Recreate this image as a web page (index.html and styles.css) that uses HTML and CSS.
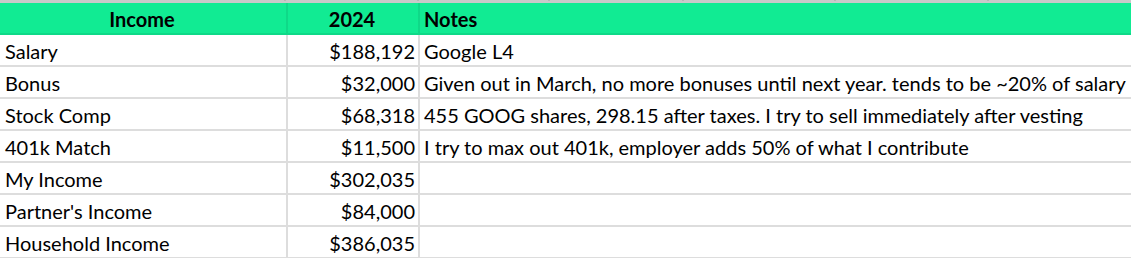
FILE: index.html
```html
<!DOCTYPE html>
<html>
<head>
<meta charset="utf-8">
<link rel="stylesheet" href="styles.css">
</head>
<body>
<div class="sheet">
  <div class="strip">
    <span class="tick t1"></span><span class="tick t2"></span><span class="tick t3"></span><span class="tick t4"></span><span class="tick t5"></span><span class="tick t6"></span><span class="tick rest"></span>
  </div>
  <div class="grid">
    <div class="cell head center">Income</div>
    <div class="cell head center">2024</div>
    <div class="cell head notes">Notes</div>

    <div class="cell">Salary</div>
    <div class="cell num">$188,192</div>
    <div class="cell notes">Google L4</div>

    <div class="cell">Bonus</div>
    <div class="cell num">$32,000</div>
    <div class="cell notes">Given out in March, no more bonuses until next year. tends to be ~20% of salary</div>

    <div class="cell">Stock Comp</div>
    <div class="cell num">$68,318</div>
    <div class="cell notes">455 GOOG shares, 298.15 after taxes. I try to sell immediately after vesting</div>

    <div class="cell">401k Match</div>
    <div class="cell num">$11,500</div>
    <div class="cell notes">I try to max out 401k, employer adds 50% of what I contribute</div>

    <div class="cell">My Income</div>
    <div class="cell num">$302,035</div>
    <div class="cell notes"></div>

    <div class="cell">Partner's Income</div>
    <div class="cell num">$84,000</div>
    <div class="cell notes"></div>

    <div class="cell">Household Income</div>
    <div class="cell num">$386,035</div>
    <div class="cell notes"></div>
  </div>
</div>
</body>
</html>
```
FILE: styles.css
```css
html, body {
  margin: 0;
  padding: 0;
  background: #ffffff;
}
body {
  font-family: Lato, "Liberation Sans", sans-serif;
  color: #000000;
  width: 1131px;
  height: 258px;
  overflow: hidden;
}
.sheet {
  display: flex;
  flex-direction: column;
}
.strip {
  display: grid;
  grid-template-columns: 286px 133px 131px 134px 152px 153px 1fr;
  height: 3px;
  background: #c9c9c9;
}
.tick {
  border-right: 2px solid #b5b5b5;
  height: 1px;
}
.tick.rest {
  border-right: none;
}
.grid {
  display: grid;
  grid-template-columns: 288px 132px 1fr;
  grid-auto-rows: 32px;
}
.cell {
  box-sizing: border-box;
  border-right: 2px solid #dddddd;
  border-bottom: 2px solid #dddddd;
  display: flex;
  align-items: flex-end;
  padding: 0 4px 2px 5px;
  font-size: 20px;
  line-height: 1.2;
  white-space: nowrap;
  overflow: visible;
}
.cell.notes {
  border-right: none;
  padding-left: 4px;
}
.cell.num {
  justify-content: flex-end;
  padding-right: 3px;
}
.cell.head {
  background: #11eb93;
  border-color: #0fd988;
  font-weight: 700;
}
.cell.center {
  justify-content: center;
  padding-left: 0;
  padding-right: 2px;
}
```
